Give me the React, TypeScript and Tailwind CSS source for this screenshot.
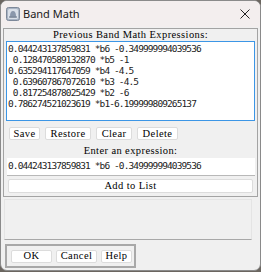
import React from 'react';

const history = [
  '0.044243137859831 *b6 -0.349999994039536',
  ' 0.128470589132870 *b5 -1',
  '0.635294117647059 *b4 -4.5',
  ' 0.639607867072610 *b3 -4.5',
  ' 0.817254878025429 *b2 -6',
  '0.786274521023619 *b1-6.199999809265137',
];

const label = "font-['Liberation_Serif',serif] font-medium text-[10.5px] tracking-[0.4px] text-black";
const data = "font-['DejaVu_Sans_Mono',monospace] text-[9.5px] tracking-[-0.9px] text-[#222] whitespace-pre";

const Btn: React.FC<{ text: string; w: string }> = ({ text, w }) => (
  <div className={`${w} h-[13px] flex items-center justify-center bg-white border border-[#dcdcdc] rounded-[2px] ${label}`}>
    {text}
  </div>
);

const AppIcon = () => (
  <svg width="14" height="14" viewBox="0 0 14 14">
    <rect x="0.5" y="0.5" width="13" height="13" rx="2" fill="#a9b4c4" stroke="#7d8899" />
    <rect x="2" y="2" width="10" height="10" rx="1.5" fill="#d9dfe8" />
    <path d="M4 9.5 Q4 4 7 4 Q10 4 10 9.5 Z" fill="#8a97ab" />
    <rect x="3.2" y="9.3" width="7.6" height="1.4" fill="#6c788c" />
  </svg>
);

const App: React.FC = () => {
  return (
    <div className="w-[261px] h-[272px] bg-[#6b6660] overflow-hidden">
      <div className="w-[261px] h-[271px] bg-[#f0f0f0] rounded-[7px] border border-[#8a8a8a] overflow-hidden flex flex-col">
        {/* title bar */}
        <div className="h-[26px] shrink-0 bg-[#f3eeee] flex items-center pl-[5px] pr-[10px]">
          <AppIcon />
          <span className="ml-[3px] font-['Noto_Sans',sans-serif] text-[11px] text-[#1a1a1a]">Band Math</span>
          <svg className="ml-auto" width="10" height="10" viewBox="0 0 10 10">
            <path d="M0.5 0.5 L9.5 9.5 M9.5 0.5 L0.5 9.5" stroke="#222" strokeWidth="1" />
          </svg>
        </div>

        {/* main group */}
        <div className="mt-[1px] mx-[2px] border border-[#a3a3a3] flex flex-col px-[2px] pb-[3px]">
          <div className={`h-[12px] flex items-center justify-center ${label}`}>Previous Band Math Expressions:</div>
          <div className="h-[80px] bg-white border border-[#3c96e6] pl-[1px] pt-[1px] leading-[11px]">
            {history.map((h, i) => (
              <div key={i} className={data}>{h}</div>
            ))}
          </div>
          <div className="flex gap-[5px] mt-[6px] pl-[3px]">
            <Btn text="Save" w="w-[31px]" />
            <Btn text="Restore" w="w-[46px]" />
            <Btn text="Clear" w="w-[36px]" />
            <Btn text="Delete" w="w-[41px]" />
          </div>
          <div className={`h-[18px] pt-[3px] flex items-center justify-center ${label}`}>Enter an expression:</div>
          <div className="h-[18px] bg-white border-b border-[#b8b8b8] flex items-center pl-[1px] ml-[1px]">
            <span className={data}>0.044243137859831 *b6 -0.349999994039536</span>
          </div>
          <div className={`mt-[3px] mx-[2px] h-[14px] flex items-center justify-center bg-white border border-[#dcdcdc] rounded-[2px] ${label}`}>
            Add to List
          </div>
        </div>

        {/* empty panel */}
        <div className="mt-[2px] ml-[3px] w-[248px] h-[41px] border border-[#e4e4e4] border-b-[#a8a8a8]" />

        {/* bottom buttons */}
        <div className="mt-[4px] ml-[4px] w-[131px] h-[24px] border-2 border-[#a8a8a8] flex items-center gap-[4px] pl-[4px]">
          <Btn text="OK" w="w-[41px]" />
          <Btn text="Cancel" w="w-[41px]" />
          <Btn text="Help" w="w-[31px]" />
        </div>
      </div>
    </div>
  );
};

export default App;
